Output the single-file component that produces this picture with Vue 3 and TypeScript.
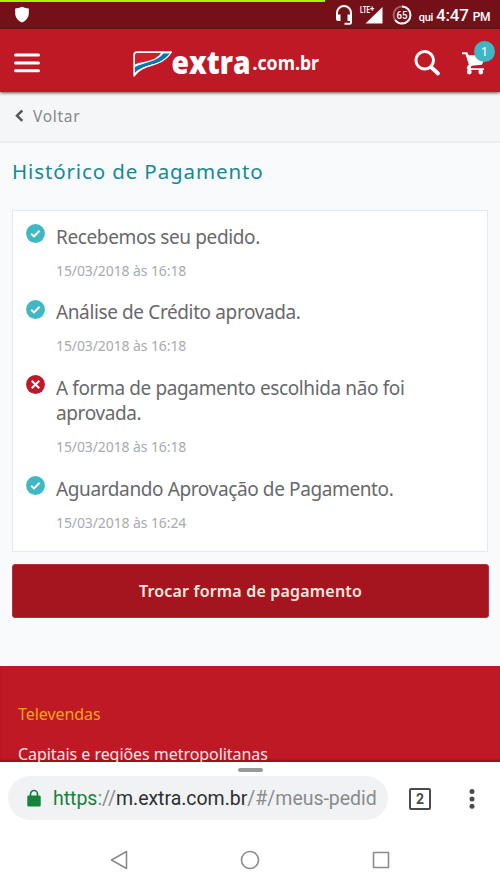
<script setup lang="ts">
interface HistoryItem {
  text: string
  date: string
  ok: boolean
}

const items: HistoryItem[] = [
  { text: 'Recebemos seu pedido.', date: '15/03/2018 às 16:18', ok: true },
  { text: 'Análise de Crédito aprovada.', date: '15/03/2018 às 16:18', ok: true },
  { text: 'A forma de pagamento escolhida não foi aprovada.', date: '15/03/2018 às 16:18', ok: false },
  { text: 'Aguardando Aprovação de Pagamento.', date: '15/03/2018 às 16:24', ok: true },
]
</script>

<template>
  <div class="screen">
    <div class="status">
      <div class="progress"></div>
      <svg class="shield" width="16" height="18" viewBox="0 0 16 18"><path d="M8 .7C10.300 1.700 12.500 2.200 14.800 2.400V7c0 4.600-2.700 7.900-6.800 9.500C3.900 14.900 1.200 11.600 1.200 7V2.400C3.500 2.200 5.700 1.700 8 .7Z" fill="#fff" /></svg>
      <svg class="headset" width="18" height="20" viewBox="0 0 18 20">
        <path d="M2 13V8a7 7 0 0 1 14 0v9.500q0 1.300-1.300 1.300H9.500" fill="none" stroke="#fff" stroke-width="2" />
        <path d="M1 9.500h4.500V16H3Q1 16 1 14ZM12.500 9.500H17V16h-4.500Z" fill="#fff" />
      </svg>
      <svg class="signal" width="23" height="20" viewBox="0 0 23 20">
        <path d="M22.500 2v16.500H5.500Z" fill="#fff" />
        <text x="0" y="7.500" class="lte" textLength="10" lengthAdjust="spacingAndGlyphs">LTE</text>
        <path d="M12.200 1.500v4.200M10.200 3.600h4" stroke="#fff" stroke-width="1.200" />
      </svg>
      <svg class="battery" width="20" height="20" viewBox="0 0 20 20">
        <circle cx="10" cy="10" r="8.500" fill="none" stroke="#a2666a" stroke-width="1.900" />
        <circle cx="10" cy="10" r="8.500" fill="none" stroke="#fff" stroke-width="1.900" pathLength="100" stroke-dasharray="65 35" transform="rotate(-90 10 10)" />
        <text x="10" y="13.800" text-anchor="middle" class="pct" textLength="11" lengthAdjust="spacingAndGlyphs">65</text>
      </svg>
      <div class="clock"><span class="day">qui</span><span class="time">4:47</span><span class="pm">PM</span></div>
    </div>

    <header class="header">
      <svg class="menu" width="26" height="20" viewBox="0 0 26 20"><path d="M1.500 1.900h23M1.500 9.900h23M1.500 17.800h23" stroke="#fff" stroke-width="3" stroke-linecap="round" /></svg>
      <svg class="logo" width="190" height="32" viewBox="0 0 190 32">
        <path d="M2 29V8Q2 5 5 5H39.500Q34.500 13 25 16.500C15 20 8 21 2 29Z" fill="#fff" />
        <path d="M3 17.500V8Q3 6 5 6H29C24 12.500 19 13 14 14.500 9 15.500 6 16 3 17.500Z" fill="#cf1f29" />
        <path d="M2.500 20.300C12 15 24 15.500 31.500 6.500H38C31.500 16.300 23 16.300 13.500 19.500 8 21.500 5 23.500 2.500 26.300Z" fill="#0d73b2" />
        <path d="M2 29V8Q2 5 5 5H39.500Q34.500 13 25 16.500C15 20 8 21 2 29Z" fill="none" stroke="#fff" stroke-width="1.300" stroke-linejoin="round" />
        <text x="39.500" y="26.500" class="brand" textLength="79" lengthAdjust="spacingAndGlyphs">extra</text>
        <text x="120.500" y="22.800" class="domain" textLength="66.500" lengthAdjust="spacingAndGlyphs">.com.br</text>
      </svg>
      <svg class="search" width="28" height="28" viewBox="0 0 28 28"><circle cx="11.700" cy="11.300" r="8.800" fill="none" stroke="#fff" stroke-width="3" /><path d="m18 18 7 6.500" stroke="#fff" stroke-width="3.800" stroke-linecap="round" /></svg>
      <div class="cart">
        <svg width="26" height="25" viewBox="0 0 26 25">
          <path d="M0 1.200h5.200l1.500 3H24l-4 9.500-10.500 1-1 2.500H22V19H6.500Q4 18 5 16L6.800 13.500 3.500 3.200H0Z" fill="#fff" />
          <circle cx="7.300" cy="21" r="2.400" fill="#fff" /><circle cx="18.800" cy="21" r="2.400" fill="#fff" />
        </svg>
        <span class="badge">1</span>
      </div>
    </header>

    <div class="back">
      <svg width="9" height="14" viewBox="0 0 9 14"><path d="M7.300 1.500 2 6.700l5.300 5.200" fill="none" stroke="#55585c" stroke-width="2.500" /></svg>
      <span>Voltar</span>
    </div>

    <main class="main">
      <h1>Histórico de Pagamento</h1>
      <ul class="card">
        <li v-for="(item, i) in items" :key="i">
          <svg class="mark" width="19" height="19" viewBox="0 0 19 19">
            <circle cx="9.500" cy="9.500" r="9.400" :fill="item.ok ? '#40b7c3' : '#c0172b'" />
            <path v-if="item.ok" d="m5.200 9.700 2.800 2.700 5.600-5.700" fill="none" stroke="#fff" stroke-width="2" />
            <path v-else d="m5.700 5.700 7.600 7.600m0-7.600-7.600 7.600" stroke="#fff" stroke-width="2" />
          </svg>
          <div class="entry">
            <p class="text">{{ item.text }}</p>
            <p class="date">{{ item.date }}</p>
          </div>
        </li>
      </ul>
      <button class="action" type="button"><span>Trocar forma de pagamento</span></button>
    </main>

    <footer class="footer">
      <p class="sales">Televendas</p>
      <p class="region">Capitais e regiões metropolitanas</p>
    </footer>

    <div class="browser">
      <div class="handle"></div>
      <div class="bar">
        <div class="address">
          <svg width="14" height="18" viewBox="0 0 14 18"><path d="M3.500 8V5a3.500 3.500 0 0 1 7 0v3" fill="none" stroke="#16833d" stroke-width="1.700" /><rect x=".3" y="6.500" width="13.400" height="11" rx="1.300" fill="#16833d" /></svg>
          <span class="url"><span class="scheme">https</span>://<span class="host">m.extra.com.br</span>/#/meus-pedid</span>
        </div>
        <div class="tabs">2</div>
        <svg class="more" width="6" height="20" viewBox="0 0 6 20"><g fill="#4b4b4b"><circle cx="3" cy="2.600" r="2.500" /><circle cx="3" cy="10" r="2.500" /><circle cx="3" cy="17.300" r="2.500" /></g></svg>
      </div>
      <nav class="nav">
        <svg width="20" height="20" viewBox="0 0 20 20"><path d="M17.500 1.500v17L2.500 10Z" /></svg>
        <svg width="20" height="20" viewBox="0 0 20 20"><circle cx="10" cy="10" r="8.500" /></svg>
        <svg width="20" height="20" viewBox="0 0 20 20"><rect x="2.500" y="2.500" width="15" height="15" /></svg>
      </nav>
    </div>
  </div>
</template>

<style>
body {
  margin: 0;
  overflow: hidden;
}
</style>

<style scoped>
* {
  box-sizing: border-box;
}
svg {
  display: block;
  flex: none;
  overflow: visible;
}
p, h1, ul {
  margin: 0;
  padding: 0;
}
.screen {
  width: 500px;
  height: 889px;
  overflow: hidden;
  display: flex;
  flex-direction: column;
  background: #f8fafc;
  font-family: "Noto Sans", sans-serif;
}
.status {
  position: relative;
  height: 29px;
  flex: none;
  display: flex;
  align-items: center;
  padding: 2px 10px 0 14px;
  background: #731018;
  color: #fff;
  font-family: Roboto, sans-serif;
}
.progress {
  position: absolute;
  left: 0;
  top: 0;
  width: 325px;
  height: 2px;
  background: #a8f000;
}
.shield {
  margin-top: -2px;
}
.headset {
  margin-left: 305px;
  margin-top: -1px;
}
.signal {
  margin: -1px 0 0 7px;
}
.battery {
  margin-left: 9px;
  margin-top: -2px;
}
.lte {
  font: 700 9px Roboto, sans-serif;
  fill: #fff;
}
.pct {
  font: 500 11px Roboto, sans-serif;
  fill: #fff;
}
.clock {
  margin-left: auto;
  display: flex;
  align-items: baseline;
  white-space: nowrap;
  line-height: 22px;
  margin-top: 2px;
}
.day {
  font-size: 11px;
  font-weight: 500;
  letter-spacing: -.3px;
  margin-right: 3px;
}
.time {
  font-size: 17px;
  font-weight: 500;
  letter-spacing: -.2px;
  margin-right: 4px;
}
.pm {
  font-size: 12px;
  font-weight: 500;
  letter-spacing: -.4px;
}
.header {
  position: relative;
  z-index: 1;
  height: 63px;
  flex: none;
  display: flex;
  align-items: center;
  padding: 5px 6px 0 14px;
  background: #c01926;
  box-shadow: 0 1px 3px rgba(70, 20, 20, .75);
}
.logo {
  margin-left: 92px;
  margin-top: -1px;
}
.brand {
  font: 800 32px "Open Sans", sans-serif;
  fill: #fff;
}
.domain {
  font: 700 20px "Noto Sans", sans-serif;
  fill: #fff;
}
.search {
  margin-left: 91px;
}
.cart {
  position: relative;
  margin-left: 21px;
}
.badge {
  position: absolute;
  left: 12px;
  top: -10px;
  width: 21px;
  height: 21px;
  border-radius: 50%;
  background: #3fb6c3;
  color: #fff;
  font-size: 13px;
  line-height: 21px;
  text-align: center;
}
.back {
  height: 51px;
  flex: none;
  display: flex;
  align-items: center;
  gap: 9px;
  padding: 0 15px 1px;
  background: #f5f6f8;
  border-bottom: 2px solid #eaecef;
  color: #85888c;
  font-size: 15.500px;
  letter-spacing: .7px;
}
.main {
  height: 523px;
  flex: none;
  padding: 14px 12px 0;
}
h1 {
  height: 53px;
  font-size: 20.500px;
  line-height: 28px;
  font-weight: 400;
  letter-spacing: .88px;
  color: #158a92;
  white-space: nowrap;
}
.card {
  height: 342px;
  border: 1px solid #e4eaf0;
  background: #fff;
  padding: 13px 12px 0 12.500px;
  list-style: none;
}
.card li {
  display: flex;
  gap: 11.500px;
  height: 75.500px;
}
.card li:nth-child(3) {
  height: 101px;
}
.entry {
  width: 380px;
}
.text {
  margin-top: .5px;
  font-size: 19px;
  line-height: 25.500px;
  letter-spacing: -.38px;
  color: #68696b;
}
.date {
  margin-top: 7.500px;
  font-size: 14px;
  line-height: 25px;
  letter-spacing: -.1px;
  color: #a7abaf;
}
.action {
  display: block;
  width: 477px;
  height: 54px;
  margin-top: 12px;
  padding: 0;
  border: 1px solid #b1303b;
  border-radius: 3px;
  background: #a51520;
  color: #fbe9de;
  font: 600 16px "Noto Sans", sans-serif;
  letter-spacing: .18px;
}
.footer {
  height: 96px;
  flex: none;
  padding: 36px 18px 0;
  background: #c01926;
  box-shadow: inset 0 -3px 3px -1px rgba(90, 0, 10, .4);
  font-size: 16px;
  line-height: 24px;
  letter-spacing: -.05px;
  white-space: nowrap;
}
.sales {
  color: #f6a51c;
}
.region {
  margin-top: 16px;
  color: #fae6e6;
}
.browser {
  position: relative;
  height: 127px;
  flex: none;
  background: #fff;
}
.handle {
  width: 25px;
  height: 4px;
  margin: 0 auto;
  position: relative;
  top: 6px;
  border-radius: 2px;
  background: #999;
}
.bar {
  display: flex;
  align-items: center;
  height: 44px;
  margin-top: 10px;
  padding: 0 25px 0 8px;
}
.address {
  width: 380px;
  height: 44px;
  display: flex;
  align-items: center;
  gap: 12px;
  padding-left: 19px;
  border-radius: 22px;
  background: #f1f2f3;
  white-space: nowrap;
}
.url {
  padding-top: 2px;
  font: 400 19.500px/30px Roboto, sans-serif;
  letter-spacing: -.03px;
  color: #8a8b8d;
}
.scheme {
  color: #16833d;
}
.host {
  color: #2d2f32;
}
.tabs {
  width: 22px;
  height: 22px;
  margin: 2px 0 0 21px;
  border: 2px solid #4b4b4b;
  border-radius: 2px;
  font: 700 14px/18px Roboto, sans-serif;
  text-align: center;
  color: #4b4b4b;
}
.more {
  margin: 2px 0 0 auto;
}
.nav {
  display: flex;
  justify-content: space-between;
  padding: 30px 109px 0;
}
.nav svg {
  fill: none;
  stroke: #8c8c8c;
  stroke-width: 1.600;
  stroke-linejoin: round;
}
</style>
